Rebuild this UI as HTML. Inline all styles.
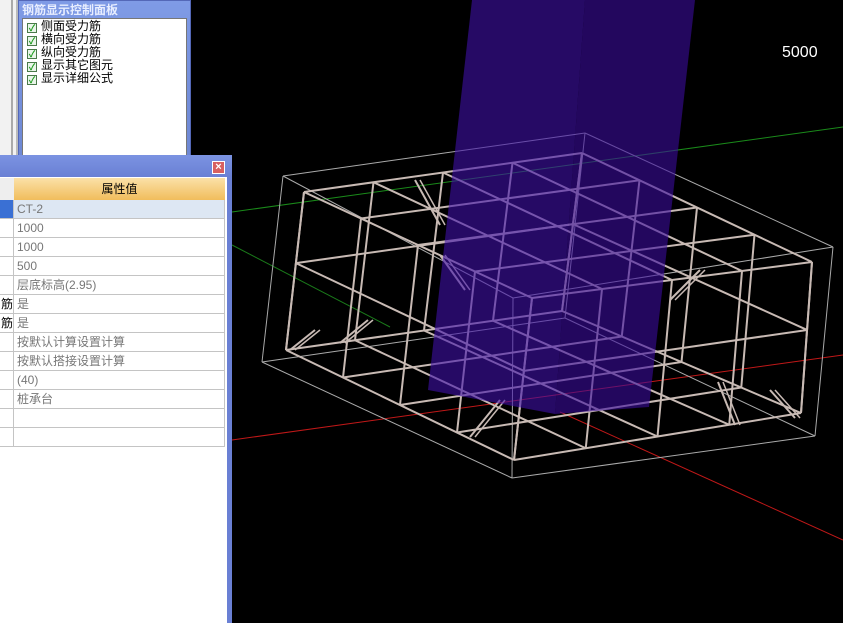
<!DOCTYPE html>
<html><head><meta charset="utf-8"><style>
*{margin:0;padding:0;box-sizing:border-box}
body{width:843px;height:623px;background:#000;position:relative;overflow:hidden;font-family:"Liberation Sans","Noto Sans CJK SC","WenQuanYi Zen Hei",sans-serif}
.abs{position:absolute}
svg{position:absolute;left:0;top:0}
.row{position:absolute;left:0;width:225px;height:19px;border-bottom:1px solid #c4c4c4;font-size:12px;color:#777;line-height:18px}
.row .l{position:absolute;left:0;top:0;width:14px;height:18px;border-right:1px solid #c4c4c4;color:#000;overflow:hidden;text-align:right}
.row .v{position:absolute;left:17px;top:0}
.cb{display:inline-block;width:10px;height:10px;border:1px solid #4a7a4a;background:#eaf5ea;color:#1a9a1a;font-size:9px;line-height:8px;text-align:center;vertical-align:-1px;margin-right:4px;font-weight:bold}
</style></head><body>
<svg width="843" height="623" id="s"></svg>
<div class="abs" style="left:782px;top:44px;color:#fff;font-size:16px">5000</div>

<div class="abs" style="left:0;top:0;width:18px;height:160px;background:#f2f2f2;border-right:2px solid #bbb"></div>
<div class="abs" style="left:11px;top:0;width:2px;height:160px;background:#aaa"></div>

<div class="abs" style="left:18px;top:0;width:173px;height:169px;background:linear-gradient(#7f9be6,#6c86d2);border:1px solid #5468b8"></div>
<div class="abs" style="left:22px;top:1px;color:#e8eeff;font-size:12px;font-weight:bold">钢筋显示控制面板</div>
<div class="abs" style="left:22px;top:18px;width:165px;height:147px;background:#fff;border:1px solid #777"></div>
<div class="abs" style="left:27px;top:20px;font-size:12px;line-height:12.5px;color:#000">
<div><span class="cb">✓</span>侧面受力筋</div><div><span class="cb">✓</span>横向受力筋</div><div><span class="cb">✓</span>纵向受力筋</div><div><span class="cb">✓</span>显示其它图元</div><div><span class="cb">✓</span>显示详细公式</div></div>

<div class="abs" style="left:0;top:155px;width:232px;height:468px;background:linear-gradient(#7b93e2,#6a80d4 22px,#6a80d4)"></div>
<div class="abs" style="left:212px;top:161px;width:13px;height:13px;background:#d86060;border:1px solid #fff;color:#fff;font-size:11px;line-height:11px;text-align:center;font-weight:bold">×</div>
<div class="abs" style="left:0;top:177px;width:227px;height:446px;background:#fff"></div>
<div class="abs" style="left:14px;top:178px;width:211px;height:22px;background:linear-gradient(#fbe1a8,#f1bd5c);text-align:center;font-size:12px;line-height:22px;color:#000">属性值</div>
<div class="abs" style="left:0;top:178px;width:14px;height:22px;background:#eee"></div>
<div id="rows"></div>

<script>
var rows=["CT-2","1000","1000","500","层底标高(2.95)","是","是","按默认计算设置计算","按默认搭接设置计算","(40)","桩承台","",""];
var h="";
rows.forEach(function(t,i){
 var y=200+i*19;
 var bg=i==0?"#dde7f3":"#fff";
 var lbg=i==0?"#3a70d4":"transparent";
 var lt=(i==5||i==6)?"筋":"";
 h+='<div class="row" style="top:'+y+'px;background:'+bg+'"><div class="l" style="background:'+lbg+'">'+lt+'</div><div class="v">'+t+'</div></div>';
});
document.getElementById("rows").innerHTML=h+'<div class="abs" style="left:224px;top:200px;width:1px;height:247px;background:#c4c4c4"></div>';

var s="";
function L(a,b,c,w,o){s+='<line x1="'+a[0]+'" y1="'+a[1]+'" x2="'+b[0]+'" y2="'+b[1]+'" stroke="'+c+'" stroke-width="'+(w||1)+'" '+(o?'opacity="'+o+'"':'')+'/>';}
function lerp(a,b,t){return [a[0]+(b[0]-a[0])*t,a[1]+(b[1]-a[1])*t];}
function bil(p,u,v){return lerp(lerp(p[0],p[1],u),lerp(p[3],p[2],u),v);}
L([232,212],[843,127],"#1a8a1a");
L([232,245],[390,327],"#1a7a1a");
L([232,440],[843,355],"#c01818");
L([560,412],[843,540],"#c01818");
var oT=[[283,176],[585,133],[833,247],[513,298]];
var oB=[[262,362],[565,318],[815,436],[512,478]];
var oc="#aaa";
for(var i=0;i<4;i++){L(oT[i],oT[(i+1)%4],oc);L(oB[i],oB[(i+1)%4],oc);L(oT[i],oB[i],oc);}
var cT=[[304,192],[582,153],[812,262],[532,298]];
var cB=[[286,350],[562,311],[801,413],[514,460]];
var cM=[];for(i=0;i<4;i++)cM.push(lerp(cT[i],cB[i],0.45));
var cc="#c8bab4";var N=4;
for(var k=0;k<=N;k++){var t=k/N;
 L(bil(cT,t,0),bil(cT,t,1),cc,2);L(bil(cT,0,t),bil(cT,1,t),cc,2);
 L(bil(cB,t,0),bil(cB,t,1),cc,2);L(bil(cB,0,t),bil(cB,1,t),cc,2);
 [[t,0],[t,1],[0,t],[1,t]].forEach(function(q){L(bil(cT,q[0],q[1]),bil(cB,q[0],q[1]),cc,2);});
}
for(i=0;i<4;i++)L(cM[i],cM[(i+1)%4],cc,2);
[[[290,350],[315,330]],[[340,343],[368,320]],[[470,437],[500,400]],[[735,425],[718,382]],[[795,418],[770,390]],[[415,180],[440,225]],[[440,255],[465,290]],[[670,300],[700,270]]].forEach(function(p){L(p[0],p[1],cc,2);L([p[0][0]+5,p[0][1]],[p[1][0]+5,p[1][1]],cc,1.5);});
s+='<polygon points="472,0 585,0 555,414 428,390" fill="#4010a8" opacity="0.6"/>';
s+='<polygon points="585,0 695,0 649,407 555,414" fill="#3a0c9c" opacity="0.6"/>';
document.getElementById("s").innerHTML=s;
</script>
</body></html>
